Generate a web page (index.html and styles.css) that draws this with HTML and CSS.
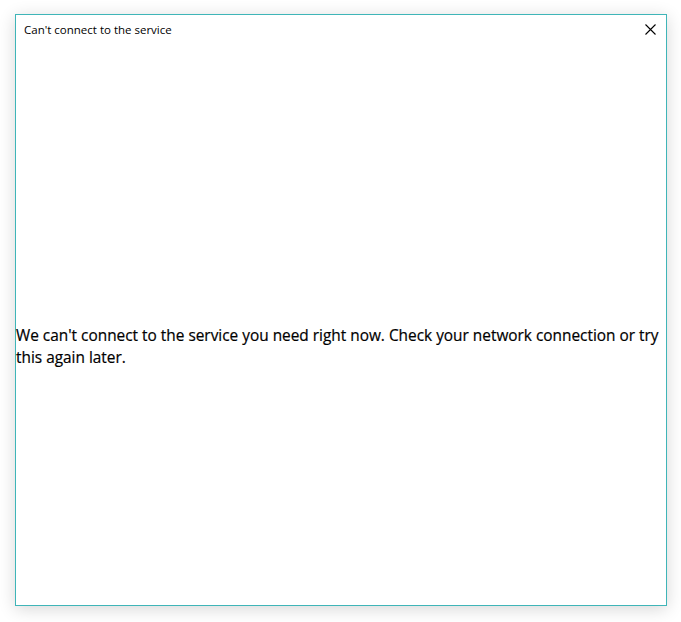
FILE: index.html
```html
<!DOCTYPE html>
<html>
<head>
<meta charset="utf-8">
<link rel="stylesheet" href="styles.css">
</head>
<body>
<div class="window">
  <div class="titlebar">
    <span class="title">Can't connect to the service</span>
    <span class="close"><svg width="11" height="11" viewBox="0 0 11 11"><path d="M0.5 0.5L10.5 10.5M10.5 0.5L0.5 10.5" stroke="#000" stroke-width="1.1" fill="none"/></svg></span>
  </div>
  <div class="content">
    <p class="message">We can't connect to the service you need right now. Check your network connection or try this again later.</p>
  </div>
</div>
</body>
</html>
```
FILE: styles.css
```css
html, body {
  margin: 0;
  padding: 0;
  background: #ffffff;
}
body {
  width: 681px;
  height: 622px;
  overflow: hidden;
  font-family: "Open Sans", "Noto Sans", sans-serif;
}
.window {
  margin: 14px 0 0 15px;
  width: 650px;
  height: 590px;
  border: 1px solid #3fb5b8;
  background: #fff;
  box-shadow: 0 3px 16px rgba(0,0,0,0.16);
  display: flex;
  flex-direction: column;
}
.titlebar {
  height: 28px;
  display: flex;
  align-items: center;
  justify-content: space-between;
  padding: 0 10px 0 8px;
}
.title {
  font-size: 11.5px;
  color: #000;
}
.close {
  display: flex;
}
.content {
  flex: 1;
  padding-top: 282px;
}
.message {
  margin: 0;
  font-size: 15.4px;
  line-height: 22px;
  color: #000;
  -webkit-text-stroke: 0.2px #000;
}
```
